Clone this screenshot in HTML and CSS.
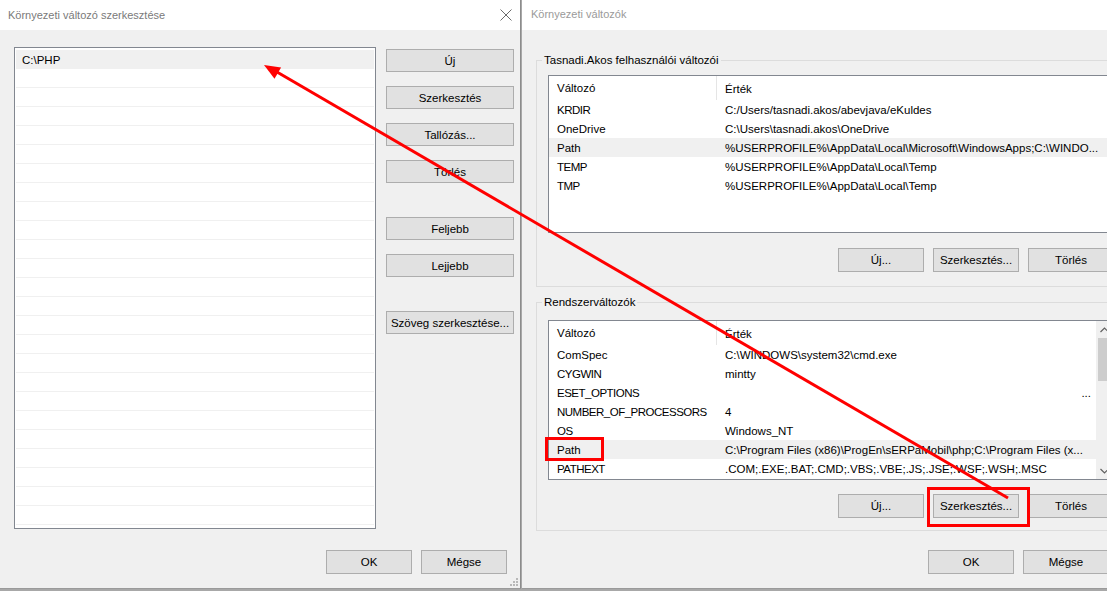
FILE: index.html
```html
<!DOCTYPE html>
<html lang="hu">
<head>
<meta charset="utf-8">
<title>Környezeti változók</title>
<link rel="stylesheet" href="styles.css">
</head>
<body>
<div class="desktop">
  <section class="win win-edit">
    <header class="titlebar">
      <span class="title">Környezeti változó szerkesztése</span>
      <svg class="close" width="12" height="12" viewBox="0 0 12 12"><path d="M0.5 0.5L11.5 11.5M11.5 0.5L0.5 11.5" stroke="#6b6b6b" stroke-width="1" fill="none"/></svg>
    </header>
    <div class="edit-body">
      <div class="pathlist">
        <div class="prow sel">C:\PHP</div>
        <div class="prow"></div><div class="prow"></div><div class="prow"></div><div class="prow"></div><div class="prow"></div>
        <div class="prow"></div><div class="prow"></div><div class="prow"></div><div class="prow"></div><div class="prow"></div>
        <div class="prow"></div><div class="prow"></div><div class="prow"></div><div class="prow"></div><div class="prow"></div>
        <div class="prow"></div><div class="prow"></div><div class="prow"></div><div class="prow"></div><div class="prow"></div>
        <div class="prow"></div><div class="prow"></div><div class="prow"></div><div class="prow"></div><div class="prow"></div>
      </div>
      <div class="side-buttons">
        <button class="btn">Új</button>
        <button class="btn">Szerkesztés</button>
        <button class="btn">Tallózás...</button>
        <button class="btn">Törlés</button>
        <button class="btn gap-before">Feljebb</button>
        <button class="btn">Lejjebb</button>
        <button class="btn gap-before">Szöveg szerkesztése...</button>
      </div>
    </div>
    <footer class="edit-footer">
      <button class="btn">OK</button>
      <button class="btn">Mégse</button>
    </footer>
    <svg class="grip" width="9" height="9" viewBox="0 0 9 9" fill="#b8b8b8">
      <rect x="7" y="1" width="2" height="2"/>
      <rect x="4" y="4" width="2" height="2"/><rect x="7" y="4" width="2" height="2"/>
      <rect x="1" y="7" width="2" height="2"/><rect x="4" y="7" width="2" height="2"/><rect x="7" y="7" width="2" height="2"/>
    </svg>
  </section>

  <section class="win win-env">
    <header class="titlebar">
      <span class="title">Környezeti változók</span>
    </header>
    <div class="env-body">
      <fieldset class="group group-user">
        <legend>Tasnadi.Akos felhasználói változói</legend>
        <div class="tbl tbl-user">
          <div class="tbl-main">
            <div class="thead"><div class="c1">Változó</div><div class="c2">Érték</div></div>
            <div class="trow"><div class="c1 caps">KRDIR</div><div class="c2">C:/Users/tasnadi.akos/abevjava/eKuldes</div></div>
            <div class="trow"><div class="c1">OneDrive</div><div class="c2">C:\Users\tasnadi.akos\OneDrive</div></div>
            <div class="trow sel"><div class="c1">Path</div><div class="c2">%USERPROFILE%\AppData\Local\Microsoft\WindowsApps;C:\WINDO...</div></div>
            <div class="trow"><div class="c1 caps">TEMP</div><div class="c2">%USERPROFILE%\AppData\Local\Temp</div></div>
            <div class="trow"><div class="c1 caps">TMP</div><div class="c2">%USERPROFILE%\AppData\Local\Temp</div></div>
          </div>
        </div>
        <div class="btn-row">
          <button class="btn">Új...</button>
          <button class="btn">Szerkesztés...</button>
          <button class="btn">Törlés</button>
        </div>
      </fieldset>

      <fieldset class="group group-sys">
        <legend>Rendszerváltozók</legend>
        <div class="tbl tbl-sys">
          <div class="tbl-main">
            <div class="thead"><div class="c1">Változó</div><div class="c2">Érték</div></div>
            <div class="trow"><div class="c1">ComSpec</div><div class="c2">C:\WINDOWS\system32\cmd.exe</div></div>
            <div class="trow"><div class="c1 caps">CYGWIN</div><div class="c2">mintty</div></div>
            <div class="trow"><div class="c1 caps">ESET_OPTIONS</div><div class="c2 dots">...</div></div>
            <div class="trow"><div class="c1 caps">NUMBER_OF_PROCESSORS</div><div class="c2">4</div></div>
            <div class="trow"><div class="c1 caps">OS</div><div class="c2">Windows_NT</div></div>
            <div class="trow sel"><div class="c1">Path</div><div class="c2">C:\Program Files (x86)\ProgEn\sERPaMobil\php;C:\Program Files (x...</div></div>
            <div class="trow"><div class="c1 caps">PATHEXT</div><div class="c2">.COM;.EXE;.BAT;.CMD;.VBS;.VBE;.JS;.JSE;.WSF;.WSH;.MSC</div></div>
          </div>
          <div class="vscroll">
            <div class="sb-arrow"><svg width="9" height="6" viewBox="0 0 9 6"><path d="M0.5 5L4.5 1L8.5 5" stroke="#606060" stroke-width="1.2" fill="none"/></svg></div>
            <div class="sb-thumb"></div>
            <div class="sb-track"></div>
            <div class="sb-arrow"><svg width="9" height="6" viewBox="0 0 9 6"><path d="M0.5 1L4.5 5L8.5 1" stroke="#606060" stroke-width="1.2" fill="none"/></svg></div>
          </div>
        </div>
        <div class="btn-row">
          <button class="btn">Új...</button>
          <button class="btn">Szerkesztés...</button>
          <button class="btn">Törlés</button>
        </div>
      </fieldset>
    </div>
    <footer class="env-footer">
      <button class="btn">OK</button>
      <button class="btn">Mégse</button>
    </footer>
  </section>
</div>

<svg class="annot" width="1107" height="591" viewBox="0 0 1107 591">
  <g fill="none" stroke="#ff0000" stroke-width="3">
    <line x1="1008" y1="498" x2="277" y2="72"/>
    <rect x="546.5" y="438.5" width="56" height="21"/>
    <rect x="928.5" y="488.5" width="100" height="37"/>
  </g>
  <polygon points="264,65 274.5,78.7 281.1,67.5" fill="#ff0000"/>
</svg>
</body>
</html>
```

FILE: styles.css
```css
* { box-sizing: border-box; }
html, body { margin: 0; padding: 0; }
body {
  width: 1107px;
  height: 591px;
  overflow: hidden;
  position: relative;
  background: #a8a8a8;
  font-family: "Liberation Sans", Arial, sans-serif;
  font-size: 11.5px;
  color: #000;
}
.desktop {
  display: flex;
  align-items: flex-start;
  height: 591px;
}
.win {
  flex: none;
  position: relative;
  display: flex;
  flex-direction: column;
  height: 589px;
  background: #f0f0f0;
  border-bottom: 1px solid #9a9a9a;
}
.win-edit { width: 521px; border-right: 1px solid #8c8c8c; }
.win-env { width: 618px; margin-left: 1px; }

.titlebar {
  flex: none;
  height: 30px;
  background: #fff;
  display: flex;
  align-items: center;
  justify-content: space-between;
}
.win-edit .titlebar { padding: 0 8px 0 8px; }
.win-env .titlebar { padding-left: 9px; padding-bottom: 3px; }
.title { font-size: 11px; color: #7a7a7a; }
.win-env .title { color: #9a9a9a; }

.btn {
  font: inherit;
  color: #000;
  height: 23px;
  padding: 0;
  background: #e1e1e1;
  border: 1px solid #adadad;
  border-radius: 0;
}

/* left dialog */
.edit-body { display: flex; padding: 17px 0 0 14px; }
.pathlist {
  width: 362px;
  height: 482px;
  padding: 2px 1px 1px 1px;
  background: #fff;
  border: 1px solid #828790;
  overflow: hidden;
}
.prow {
  height: 19px;
  line-height: 18px;
  padding: 1px 0 0 6px;
  border-bottom: 1px solid #f0f0f0;
}
.prow.sel { background: #f0f0f0; }
.side-buttons {
  display: flex;
  flex-direction: column;
  gap: 14px;
  width: 128px;
  margin-left: 10px;
  padding-top: 2px;
}
.side-buttons .gap-before { margin-top: 20px; }
.edit-footer {
  display: flex;
  justify-content: flex-end;
  gap: 9px;
  padding: 21px 13px 0 0;
}
.edit-footer .btn, .env-footer .btn, .btn-row .btn { width: 86px; height: 24px; }
.grip { position: absolute; right: 2px; bottom: 2px; }

/* right dialog */
.env-body { padding: 23px 14px 0 14px; }
.group {
  margin: 0;
  min-width: 0;
  border: 1px solid #dcdcdc;
  padding: 7px 11px 14px 11px;
}
.group legend {
  padding: 0 2px;
  margin-left: -6px;
  line-height: 15px;
}
.group-sys { margin-top: 8px; padding-top: 10px; padding-bottom: 12px; }

.tbl {
  display: flex;
  height: 158px;
  background: #fff;
  border: 1px solid #828790;
  overflow: hidden;
}
.tbl-sys { height: 160px; }
.tbl-main { flex: 1; min-width: 0; }
.thead, .trow { display: grid; grid-template-columns: 168px 1fr; }
.thead { height: 24px; line-height: 24px; padding-top: 1px; }
.thead .c1 { border-right: 1px solid #e5e5e5; margin-top: -1px; }
.trow { height: 19px; line-height: 19px; padding-top: 1px; }
.trow.sel { background: #f0f0f0; }
.c1, .c2 { padding-left: 8px; white-space: nowrap; overflow: hidden; }
.c1.caps { letter-spacing: -0.5px; }
.c2.dots { text-align: right; padding-right: 5px; }

.vscroll {
  flex: none;
  width: 17px;
  display: flex;
  flex-direction: column;
  background: #f0f0f0;
}
.sb-arrow { height: 17px; display: flex; align-items: center; justify-content: center; }
.sb-thumb { height: 43px; margin: 0 2px; background: #cdcdcd; }
.sb-track { flex: 1; }

.btn-row {
  display: flex;
  justify-content: flex-end;
  gap: 9px;
  margin-top: 15px;
}
.group-sys .btn-row { margin-top: 14px; }

.env-footer {
  display: flex;
  justify-content: flex-end;
  gap: 9px;
  padding: 19px 31px 0 0;
}

.annot { position: absolute; left: 0; top: 0; pointer-events: none; }
```
